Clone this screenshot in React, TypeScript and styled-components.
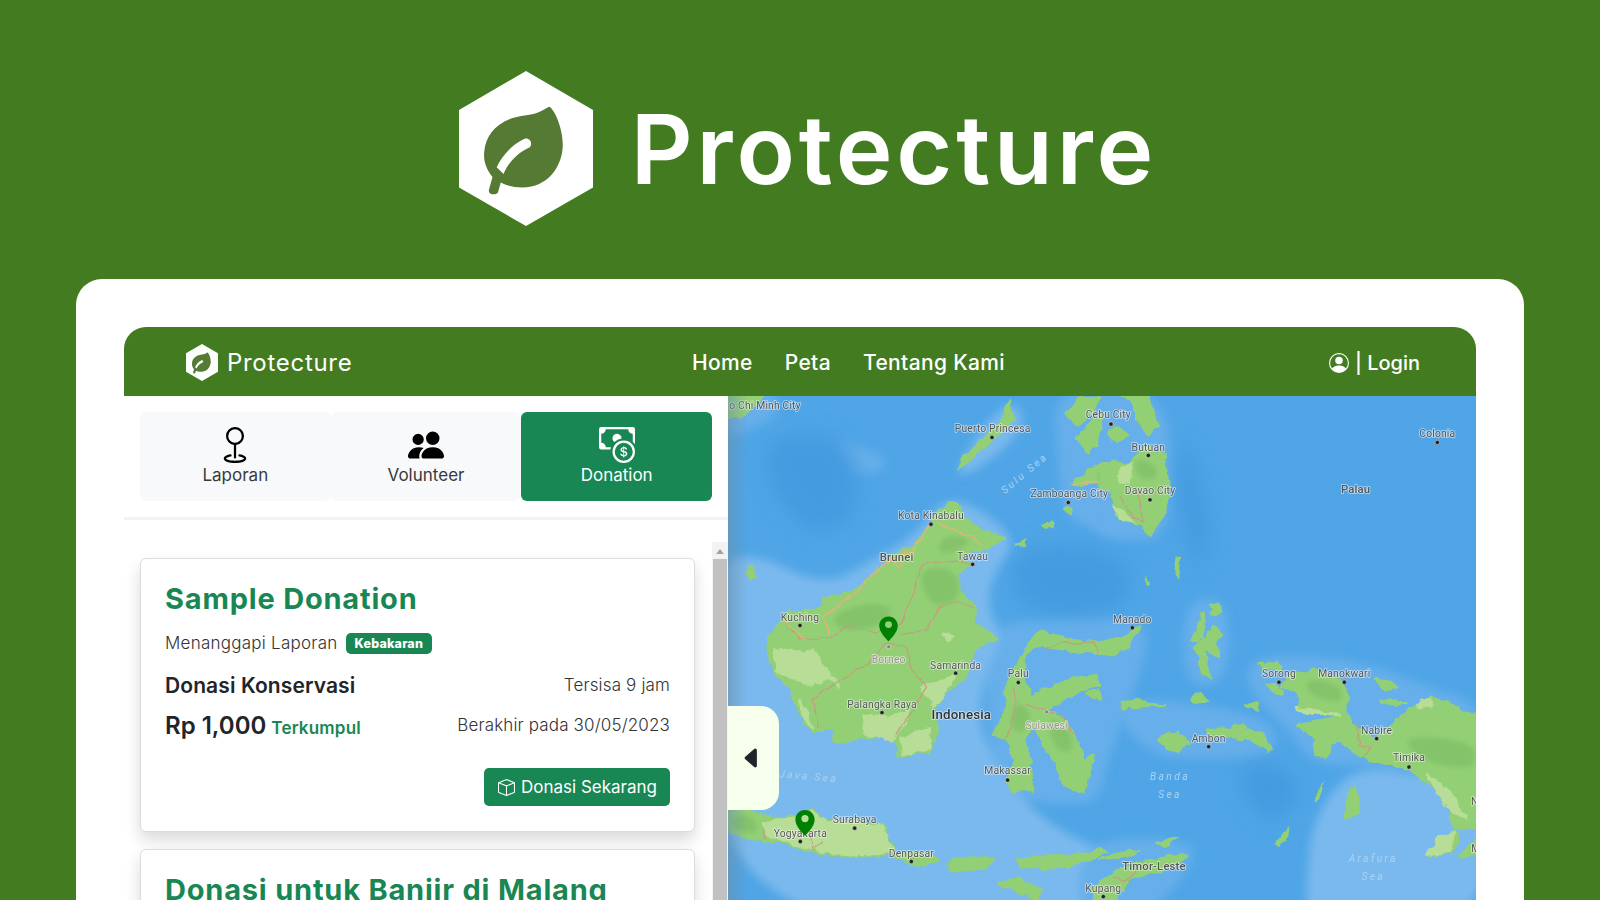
import styled, { createGlobalStyle } from "styled-components";
import { BsGeo, BsPeopleFill, BsCashCoin, BsPersonCircle, BsBox, BsCaretLeftFill } from "react-icons/bs";

const GlobalStyle = createGlobalStyle`
  html, body {
    margin: 0;
    height: 100%;
    overflow: hidden;
    background: #437c20;
    font-family: Inter, "Open Sans", sans-serif;
  }
  * { box-sizing: border-box; }
`;

const Page = styled.div`
  height: 900px;
  overflow: hidden;
  display: flex;
  flex-direction: column;
  background: #437c20;
`;

const Hero = styled.header`
  height: 279px;
  flex: none;
  padding: 18px 0 0 16px;
  display: flex;
  align-items: center;
  justify-content: center;
  gap: 38px;
`;

const HeroName = styled.span`
  font-size: 96px;
  font-weight: 600;
  letter-spacing: 3.9px;
  color: #fff;
`;

const Panel = styled.main`
  margin: 0 76px;
  flex: 1;
  min-height: 0;
  padding: 48px 48px 0;
  background: #fff;
  border-radius: 26px 26px 0 0;
`;

const AppFrame = styled.div`
  height: 100%;
  display: flex;
  flex-direction: column;
  border-radius: 22px 22px 0 0;
  overflow: hidden;
`;

const NavBar = styled.nav`
  height: 69px;
  flex: none;
  padding: 2px 56px 0 62px;
  display: flex;
  align-items: center;
  background: #437c20;
  color: #fff;
`;

const NavBrand = styled.div`
  width: 506px;
  display: flex;
  align-items: center;
  gap: 9px;
  font-size: 24px;
  letter-spacing: 0.7px;
`;

const NavLinks = styled.div`
  display: flex;
  gap: 32px;
`;

const NavLink = styled.a`
  font-size: 21px;
  font-weight: 500;
  letter-spacing: 0.35px;
`;

const LoginLink = styled.a`
  margin-left: auto;
  display: flex;
  align-items: center;
  gap: 6px;
  font-size: 20px;
  font-weight: 500;
`;

const Workspace = styled.div`
  flex: 1;
  min-height: 0;
  display: flex;
`;

const Sidebar = styled.aside`
  width: 604px;
  flex: none;
  display: flex;
  flex-direction: column;
`;

const TabBar = styled.div`
  flex: none;
  padding: 16px 16px;
  display: grid;
  grid-template-columns: repeat(3, 1fr);
  border-bottom: 3px solid #f3f3f3;
`;

const Tab = styled.button<{ $active?: boolean }>`
  height: 89px;
  border: 0;
  border-radius: 6px;
  padding: 15px 0 0;
  display: flex;
  flex-direction: column;
  align-items: center;
  gap: 2px;
  font: 400 17px Inter, sans-serif;
  color: ${(p) => (p.$active ? "#fff" : "#3a3a3a")};
  background: ${(p) => (p.$active ? "#198754" : "#f8f9fa")};
  svg {
    color: ${(p) => (p.$active ? "#fff" : "#000")};
  }
`;

const ListArea = styled.div`
  flex: 1;
  min-height: 0;
  display: flex;
  padding-top: 22px;
`;

const CardList = styled.div`
  flex: 1;
  min-width: 0;
  padding: 16px 17px 0 16px;
  display: flex;
  flex-direction: column;
  gap: 17px;
  overflow: hidden;
`;

const ScrollRail = styled.div`
  width: 16px;
  flex: none;
  padding: 4px 1px 0 1px;
  display: flex;
  flex-direction: column;
  align-items: center;
  background: #f3f3f3;
`;

const ScrollArrow = styled.span`
  height: 13px;
  flex: none;
  &::before {
    content: "";
    display: block;
    margin-top: 3px;
    border-left: 4px solid transparent;
    border-right: 4px solid transparent;
    border-bottom: 5px solid #a3a3a3;
  }
`;

const ScrollThumb = styled.div`
  width: 100%;
  flex: 1;
  background: #c1c1c1;
`;

const Card = styled.article`
  height: 274px;
  flex: none;
  padding: 20px 24px;
  display: flex;
  flex-direction: column;
  border: 1px solid #dcdcdc;
  border-radius: 6px;
  background: #fff;
  box-shadow: 0 8px 16px rgba(0, 0, 0, 0.15);
`;

const CardTitle = styled.h3`
  margin: 0 0 12px;
  font-size: 29px;
  line-height: 40px;
  font-weight: 700;
  letter-spacing: 0.8px;
  white-space: nowrap;
  color: #198754;
`;

const ReportLine = styled.div`
  display: flex;
  align-items: center;
  gap: 8px;
  height: 24px;
  margin-bottom: 15px;
  font-size: 17px;
  font-weight: 300;
  letter-spacing: 0.25px;
  color: #333;
`;

const Badge = styled.span`
  padding: 3px 9px;
  border-radius: 5px;
  font-size: 12.5px;
  font-weight: 800;
  letter-spacing: 0.2px;
  color: #fff;
  background: #198754;
`;

const InfoRow = styled.div`
  display: flex;
  justify-content: space-between;
  align-items: center;
  height: 30px;
  margin-bottom: 10px;
`;

const ProgramName = styled.span`
  font-size: 21px;
  font-weight: 600;
  letter-spacing: 0.1px;
  color: #212529;
`;

const MutedText = styled.span`
  font-size: 17px;
  font-weight: 300;
  letter-spacing: 0.15px;
  color: #333;
`;

const AmountGroup = styled.span`
  display: flex;
  align-items: baseline;
  gap: 5px;
`;

const Amount = styled.span`
  font-size: 24px;
  font-weight: 600;
  color: #212529;
`;

const Collected = styled.span`
  font-size: 17px;
  font-weight: 600;
  letter-spacing: 0.2px;
  color: #198754;
`;

const CardActions = styled.div`
  display: flex;
  justify-content: flex-end;
  margin-top: 18px;
`;

const DonateButton = styled.button`
  height: 38px;
  padding: 0 13px 0 14px;
  display: flex;
  align-items: center;
  gap: 6px;
  border: 0;
  border-radius: 5px;
  font: 400 17px Inter, sans-serif;
  color: #fff;
  background: #198754;
`;

const MapPane = styled.section`
  position: relative;
  flex: 1;
  min-width: 0;
  overflow: hidden;
  background: #4fa5e6;
`;

const MapSvg = styled.svg`
  display: block;
  width: 100%;
  height: 100%;
`;

const MapToggle = styled.button`
  position: absolute;
  left: 0;
  top: 310px;
  width: 51px;
  height: 104px;
  border: 0;
  padding: 0 3px 0 0;
  display: flex;
  align-items: center;
  justify-content: center;
  border-radius: 0 18px 18px 0;
  color: #212529;
  background: #f6ffec;
`;

const MapLabel = styled.text<{ $kind?: "city" | "big" | "muted" | "sea" | "bold" }>`
  font-family: Roboto, sans-serif;
  text-anchor: middle;
  paint-order: stroke;
  stroke-linejoin: round;
  font-size: ${(p) => (p.$kind === "big" ? 40 : p.$kind === "bold" ? 34 : 31)}px;
  font-weight: ${(p) => (p.$kind === "big" || p.$kind === "bold" ? 500 : 400)};
  letter-spacing: ${(p) => (p.$kind === "sea" ? 7 : 0.5)}px;
  font-style: ${(p) => (p.$kind === "sea" ? "italic" : "normal")};
  fill: ${(p) => (p.$kind === "sea" ? "#a9d2f3" : p.$kind === "muted" ? "#a08f98" : p.$kind === "big" ? "#333" : "#555")};
  stroke: ${(p) => (p.$kind === "sea" ? "none" : "rgba(255,255,255,0.6)")};
  stroke-width: 5px;
`;

function HexLogo({ width, height, leaf }: { width: number; height: number; leaf: string }) {
  return (
    <svg width={width} height={height} viewBox="42 63 292 464" preserveAspectRatio="none">
      <polygon points="188,63 334,180 334,412 188,527 42,412 42,180" fill="#fff" />
      <path
        fill={leaf}
        d="M238 170 C248 172 270 235 268 290 C266 350 235 412 180 412 C160 412 145 406 133 397 L127 426 C124 436 106 434 107 420 L115 380 C100 355 95 330 97 305 C100 250 130 205 185 196 C215 192 225 180 238 170 Z"
      />
      <path
        fill="#fff"
        d="M185 266 C196 262 204 280 196 291 C170 308 150 335 139 371 L124 351 C135 320 155 285 185 266 Z"
      />
    </svg>
  );
}

// smooth closed outline through the midpoints of the given points
function blob(points: string) {
  const p = points.trim().split(/\s+/).map((s) => s.split(",").map(Number));
  const mid = (a: number[], b: number[]) => `${(a[0] + b[0]) / 2} ${(a[1] + b[1]) / 2}`;
  let d = `M${mid(p[p.length - 1], p[0])}`;
  p.forEach((pt, i) => {
    d += ` Q${pt[0]} ${pt[1]} ${mid(pt, p[(i + 1) % p.length])}`;
  });
  return d + "Z";
}

type Label = [string, number, number, ("city" | "big" | "muted" | "sea" | "bold")?];
type Dot = [number, number];

interface RegionData {
  x: number;
  shallow: string[];
  mid: string[];
  deep: string[];
  land: string[];
  light: string[];
  dark: string[];
  lines: string[];
  roads: string[];
  labels: Label[];
  dots: Dot[];
}

const west: RegionData = {
  x: 730,
  shallow: [
    "-60,520 70,470 280,580 440,490 560,420 650,300 790,370 860,450 790,540 770,640 820,720 780,800 740,960 790,1100 900,1240 1010,1320 1200,1400 1260,1600 -60,1600",
    "660,250 810,30 880,40 870,120 740,230",
  ],
  mid: [
    "970,-20 1220,-20 1220,440 1130,420 1000,370 980,180",
    "770,700 930,670 1250,670 1250,790 1130,1100 1110,1220 1000,1230 830,1210 770,1030",
    "-60,-20 140,-20 150,60 40,120 -60,130",
    "300,130 460,180 470,230 340,250",
  ],
  deep: ["90,130 330,110 400,260 350,400 230,420 130,300", "880,440 1200,470 1200,650 920,670 830,560"],
  land: [
    "115,725 150,690 155,665 190,655 280,640 288,608 370,598 410,560 440,530 470,500 520,465 555,455 580,415 600,390 640,345 650,325 680,325 700,372 770,412 820,435 770,462 725,470 690,490 720,512 680,540 690,592 742,642 728,680 802,735 735,762 705,850 650,892 610,940 622,1005 602,1068 510,1088 500,1040 430,1022 315,1045 310,1000 250,1012 210,962 185,890 130,832 115,770",
    "685,222 700,185 770,130 820,75 835,22 850,72 790,135 730,190",
    "862,810 880,765 935,712 1010,735 1100,745 1170,730 1232,695 1192,760 1120,782 1000,765 920,752 885,785 880,860 905,905 960,880 1040,850 1105,845 1110,872 1050,890 1000,922 950,945 1012,985 1032,1022 1062,1100 1092,1085 1060,1192 1000,1172 980,1110 940,1052 920,992 880,1032 902,1100 908,1188 850,1192 830,1162 850,1092 830,1032 790,1017 830,950 825,880",
    "-10,1250 60,1248 130,1272 190,1268 240,1245 290,1278 370,1278 460,1288 480,1340 492,1372 400,1388 320,1382 240,1368 150,1342 60,1332 -10,1312",
    "490,1378 600,1372 622,1400 580,1412 520,1398",
    "655,1402 700,1385 790,1395 762,1422 660,1428",
    "860,1395 970,1380 1050,1385 1100,1365 1132,1375 1000,1417 870,1417",
    "805,1462 870,1448 932,1490 922,1512 860,1492",
    "1010,60 1050,12 1105,8 1090,60 1040,90",
    "1040,130 1090,80 1122,58 1100,140 1075,178 1050,140",
    "1130,115 1170,100 1192,125 1150,140",
    "50,530 70,518 76,545 60,552",
    "1022,272 1040,255 1110,210 1140,218 1160,240 1200,212 1225,300 1225,385 1160,360 1170,300 1100,262 1040,278",
    "1000,345 1030,338 1020,362",
    "-10,0 110,0 75,30 30,70 -10,78",
    "855,455 890,438 880,452",
    "1070,895 1105,885 1115,915 1085,912",
    "1035,1125 1060,1120 1050,1175 1032,1160",
    "940,392 965,385 968,398 945,400",
    "1185,925 1220,915 1215,940",
  ],
  light: [
    "130,760 190,770 250,770 330,875 300,850 250,872 140,830",
    "210,910 250,1000 215,965",
    "400,960 470,965 540,950 490,1040 400,1015",
    "510,1030 600,1000 600,1062 520,1082",
    "570,880 680,835 650,890 610,935",
    "640,720 670,725 650,745",
    "100,1280 130,1275 190,1272 240,1250 290,1282 370,1282 460,1292 478,1340 488,1368 400,1384 320,1378 240,1362 150,1335 110,1320",
  ],
  dark: [
    "560,520 680,520 690,620 600,640",
    "300,660 430,620 500,650 440,700 330,710",
    "640,420 730,430 690,470 620,480",
    "850,920 910,950 880,1020 840,1000",
    "950,960 1020,1000 1030,1080 970,1060",
    "0,1265 70,1260 90,1320 10,1305",
    "1100,230 1180,230 1160,300 1110,270",
  ],
  lines: [
    "160,680 210,735 300,730 350,695 440,715 510,690 545,610 575,510 680,500 725,510",
    "245,915 340,850 410,810 470,745 530,760 550,830 590,880 500,1020",
    "250,915 265,1000",
    "510,720 590,710 625,640 680,620 730,640",
    "850,880 855,960 830,1030",
    "890,930 1000,965 1030,1020",
    "950,760 1000,745 1090,745 1110,775",
    "100,1300 105,1335",
    "240,1320 250,1365 280,1340",
  ],
  roads: [
    "600,390 550,470 460,510 370,600 280,670 300,720",
    "620,385 730,430 760,450",
    "480,490 510,525 530,465",
    "1030,275 1080,262 1160,270 1200,360",
    "160,680 230,740",
  ],
  labels: [
    ["o Chi Minh City", 105, 45],
    ["Puerto Princesa", 788, 114],
    ["Cebu City", 1135, 72],
    ["Zamboanga City", 1018, 308],
    ["Kota Kinabalu", 603, 375],
    ["Brunei", 500, 500, "bold"],
    ["Tawau", 728, 496],
    ["Kuching", 210, 680],
    ["Borneo", 476, 805, "muted"],
    ["Samarinda", 677, 822],
    ["Palu", 865, 848],
    ["Palangka Raya", 456, 940],
    ["Indonesia", 694, 974, "big"],
    ["Sulawesi", 950, 1002, "muted"],
    ["Makassar", 833, 1138],
    ["Surabaya", 374, 1285],
    ["Yogyakarta", 211, 1327],
    ["Denpasar", 544, 1385],
    ["Kupang", 1120, 1492],
  ],
  dots: [
    [786, 130], [1142, 90], [1015, 325], [603, 390], [728, 510], [210, 693], [677, 836], [865, 864],
    [456, 954], [833, 1156], [374, 1300], [211, 1340], [544, 1400], [1120, 1505],
  ],
};

const east: RegionData = {
  x: 1100,
  shallow: ["620,1440 640,1270 760,1110 1000,1150 1160,1150 1160,1600 620,1600"],
  mid: [
    "440,790 620,780 820,810 990,880 1160,930 1160,1200 940,1120 780,1110 640,1110 560,1000 450,900",
    "250,620 380,610 390,790 350,880 250,860",
    "60,900 520,960 530,1090 330,1090 170,1090 50,980",
    "-60,1330 280,1330 280,1420 100,1600 -60,1600",
    "-50,-20 190,-20 230,300 180,430 130,440 -50,420",
  ],
  deep: ["420,1090 580,1120 600,1220 520,1290 430,1220", "250,80 340,400 300,560 220,300"],
  land: [
    "60,5 140,5 172,90 150,120 120,90 95,20",
    "25,120 60,105 80,125 50,140",
    "0,212 40,205 90,210 130,160 190,180 207,280 192,360 152,418 130,400 110,385 60,370 40,300 0,280",
    "278,735 310,652 318,700 295,738",
    "332,632 358,625 358,652 335,660",
    "285,760 340,698 365,712 340,750 360,780 310,770 328,852 305,830 295,790",
    "320,1008 420,995 490,1020 512,1068 440,1032 330,1020",
    "178,1030 230,1012 262,1040 240,1068 200,1060",
    "272,908 300,895 325,915 285,922",
    "65,922 110,920 195,930 120,935 70,942",
    "435,932 480,922 478,942",
    "540,872 590,835 650,828 725,860 740,900 735,950 770,1000 830,1030 880,985 945,935 990,905 1010,915 1135,965 1135,1298 1062,1302 1052,1250 1030,1200 940,1130 830,1102 780,1085 715,1040 700,1050 680,1082 650,1082 640,1020 592,992 670,975 720,965 650,952 600,945 590,890",
    "475,810 530,802 542,825 500,825",
    "500,870 530,872 545,900 520,895",
    "822,850 870,858 888,882 850,880",
    "838,915 920,925 880,932",
    "732,1275 750,1200 768,1175 778,1250",
    "530,1345 565,1298 560,1332 540,1352",
    "165,1348 230,1328 200,1352",
    "0,1388 60,1375 115,1368 60,1392",
    "-20,1475 60,1422 150,1395 265,1380 200,1422 90,1452 40,1530 -20,1530",
    "640,1212 668,1168 655,1210",
    "225,495 237,490 232,545",
    "980,1382 1020,1325 1062,1312 1078,1330 1052,1378",
    "140,550 152,565 148,572",
    "1080,1380 1135,1330 1135,1385",
  ],
  light: [
    "590,940 650,950 720,958 620,958",
    "980,1380 1020,1325 1060,1312 1050,1375",
    "980,1140 1050,1190 1100,1270 1040,1240",
    "60,220 95,210 90,260 55,270",
    "950,925 990,908 1000,930 960,942",
    "40,330 100,380 60,370",
  ],
  dark: [
    "620,850 720,870 730,930 620,900",
    "900,1020 1128,1040 1128,1130 960,1100",
    "100,190 170,210 170,260 110,250",
  ],
  lines: ["770,980 775,1050 810,1060 790,1090", "60,310 100,370 130,380 110,290", "40,1445 70,1460 110,1430"],
  roads: [],
  labels: [
    ["Butuan", 145, 170],
    ["Davao City", 150, 298],
    ["Colonia", 1012, 130],
    ["Palau", 767, 296, "bold"],
    ["Manado", 97, 685],
    ["Sorong", 537, 848],
    ["Manokwari", 733, 846],
    ["Nabire", 830, 1018],
    ["Ambon", 326, 1042],
    ["Timika", 927, 1100],
    ["Banda", 210, 1155, "sea"],
    ["Sea", 210, 1210, "sea"],
    ["Arafura", 820, 1400, "sea"],
    ["Sea", 820, 1455, "sea"],
    ["Timor-Leste", 162, 1425, "bold"],
    ["Nabire", 1160, 1232],
    ["Merauke", 1175, 1372],
  ],
  dots: [
    [33, 90], [145, 184], [150, 317], [1012, 145], [97, 700], [537, 863], [733, 863], [830, 1032], [326, 1056], [927, 1117],
  ],
};

const PIN = "M0 -37 C-10 -37 -16 -29 -16 -21 C-16 -10 -5 0 0 6 C5 0 16 -10 16 -21 C16 -29 10 -37 0 -37 Z M0 -29 A6 6 0 1 0 0 -17 A6 6 0 1 0 0 -29 Z";

function Water({ r }: { r: RegionData }) {
  return (
    <g transform={`translate(${r.x} 395) scale(0.3333)`}>
      <g filter="url(#soft)">
        {r.mid.map((s) => <path key={s} d={blob(s)} fill="#66afea" />)}
        {r.shallow.map((s) => <path key={s} d={blob(s)} fill="#7ab9ed" />)}
      </g>
      <g filter="url(#softer)">
        {r.deep.map((s) => <path key={s} d={blob(s)} fill="#459bdf" />)}
      </g>
    </g>
  );
}

function Land({ r }: { r: RegionData }) {
  return (
    <g transform={`translate(${r.x} 395) scale(0.3333)`}>
      <g filter="url(#coast)">
        {r.land.map((s) => <polygon key={s} points={s} fill="#93d074" stroke="#93d074" strokeWidth="7" strokeLinejoin="round" />)}
        {r.light.map((s) => <polygon key={s} points={s} fill="#b8dd96" stroke="#b8dd96" strokeWidth="6" strokeLinejoin="round" />)}
      </g>
      <g filter="url(#patch)">
        {r.dark.map((s) => <path key={s} d={blob(s)} fill="#84c36b" />)}
      </g>
      <g filter="url(#wiggle)">
        {r.lines.map((s) => <polyline key={s} points={s} fill="none" stroke="#c69b7e" strokeWidth="3.5" strokeLinejoin="round" />)}
        {r.roads.map((s) => <polyline key={s} points={s} fill="none" stroke="#eab07a" strokeWidth="4" strokeLinejoin="round" />)}
      </g>
    </g>
  );
}

function Labels({ r }: { r: RegionData }) {
  return (
    <g transform={`translate(${r.x} 395) scale(0.3333)`}>
      {r.dots.map(([cx, cy]) => <circle key={`${cx}-${cy}`} cx={cx} cy={cy} r="6.5" fill="#222" stroke="#ddd" strokeWidth="1.5" />)}
      <g filter="url(#text)">
        {r.labels.map(([text, lx, ly, kind]) => (
          <MapLabel key={`${text}-${lx}`} x={lx} y={ly} $kind={kind}>{text}</MapLabel>
        ))}
      </g>
    </g>
  );
}

function WorldMap() {
  return (
    <MapSvg viewBox="728 397 748 503" preserveAspectRatio="none">
      <defs>
        <filter id="soft" x="-10%" y="-10%" width="120%" height="120%"><feGaussianBlur stdDeviation="14" /></filter>
        <filter id="softer" x="-30%" y="-30%" width="160%" height="160%"><feGaussianBlur stdDeviation="30" /></filter>
        <filter id="patch" x="-20%" y="-20%" width="140%" height="140%"><feGaussianBlur stdDeviation="8" /></filter>
        <filter id="coast" x="-5%" y="-5%" width="110%" height="110%">
          <feTurbulence type="fractalNoise" baseFrequency="0.03" numOctaves="3" seed="4" result="n" />
          <feDisplacementMap in="SourceGraphic" in2="n" scale="24" xChannelSelector="R" yChannelSelector="G" />
          <feGaussianBlur stdDeviation="1.4" />
        </filter>
        <filter id="wiggle" x="-5%" y="-5%" width="110%" height="110%">
          <feTurbulence type="fractalNoise" baseFrequency="0.03" numOctaves="2" seed="9" result="n" />
          <feDisplacementMap in="SourceGraphic" in2="n" scale="16" xChannelSelector="R" yChannelSelector="G" />
          <feGaussianBlur stdDeviation="0.8" />
        </filter>
        <filter id="text" x="-5%" y="-5%" width="110%" height="110%"><feGaussianBlur stdDeviation="0.7" /></filter>
        <linearGradient id="shade" x1="0" x2="1">
          <stop offset="0" stopColor="#6c8fa8" stopOpacity="0.55" />
          <stop offset="1" stopColor="#6c8fa8" stopOpacity="0" />
        </linearGradient>
      </defs>
      <rect x="728" y="397" width="748" height="503" fill="#4fa5e6" />
      <Water r={west} />
      <Water r={east} />
      <Land r={west} />
      <Land r={east} />
      <Labels r={west} />
      <Labels r={east} />
      <g transform="translate(730 395) scale(0.3333)">
        <circle cx="476" cy="757" r="6" fill="#8c7f88" stroke="#ddd" strokeWidth="2" />
        <circle cx="950" cy="952" r="6" fill="#8c7f88" stroke="#ddd" strokeWidth="2" />
        <MapLabel x={890} y={245} $kind="sea" transform="rotate(-40 890 245)">Sulu Sea</MapLabel>
        <MapLabel x={235} y={1155} $kind="sea" transform="rotate(5 235 1155)">Java Sea</MapLabel>
      </g>
      <rect x="728" y="397" width="20" height="503" fill="url(#shade)" />
      <path d={PIN} transform="translate(888.5 638.5) scale(0.58)" fill="#008000" fillRule="evenodd" />
      <path d={PIN} transform="translate(805 832.5) scale(0.6)" fill="#008000" fillRule="evenodd" />
    </MapSvg>
  );
}

export default function App() {
  return (
    <Page>
      <GlobalStyle />
      <Hero>
        <HexLogo width={134} height={155} leaf="#557a33" />
        <HeroName>Protecture</HeroName>
      </Hero>
      <Panel>
        <AppFrame>
          <NavBar>
            <NavBrand>
              <HexLogo width={32} height={37} leaf="#557a33" />
              Protecture
            </NavBrand>
            <NavLinks>
              <NavLink>Home</NavLink>
              <NavLink>Peta</NavLink>
              <NavLink>Tentang Kami</NavLink>
            </NavLinks>
            <LoginLink>
              <BsPersonCircle size={20} />| Login
            </LoginLink>
          </NavBar>
          <Workspace>
            <Sidebar>
              <TabBar>
                <Tab>
                  <BsGeo size={36} />
                  Laporan
                </Tab>
                <Tab>
                  <BsPeopleFill size={36} />
                  Volunteer
                </Tab>
                <Tab $active>
                  <BsCashCoin size={36} />
                  Donation
                </Tab>
              </TabBar>
              <ListArea>
                <CardList>
                  <Card>
                    <CardTitle>Sample Donation</CardTitle>
                    <ReportLine>
                      Menanggapi Laporan <Badge>Kebakaran</Badge>
                    </ReportLine>
                    <InfoRow>
                      <ProgramName>Donasi Konservasi</ProgramName>
                      <MutedText>Tersisa 9 jam</MutedText>
                    </InfoRow>
                    <InfoRow>
                      <AmountGroup>
                        <Amount>Rp 1,000</Amount>
                        <Collected>Terkumpul</Collected>
                      </AmountGroup>
                      <MutedText>Berakhir pada 30/05/2023</MutedText>
                    </InfoRow>
                    <CardActions>
                      <DonateButton>
                        <BsBox size={17} />
                        Donasi Sekarang
                      </DonateButton>
                    </CardActions>
                  </Card>
                  <Card>
                    <CardTitle>Donasi untuk Banjir di Malang</CardTitle>
                  </Card>
                </CardList>
                <ScrollRail>
                  <ScrollArrow />
                  <ScrollThumb />
                </ScrollRail>
              </ListArea>
            </Sidebar>
            <MapPane>
              <WorldMap />
              <MapToggle>
                <BsCaretLeftFill size={26} />
              </MapToggle>
            </MapPane>
          </Workspace>
        </AppFrame>
      </Panel>
    </Page>
  );
}
